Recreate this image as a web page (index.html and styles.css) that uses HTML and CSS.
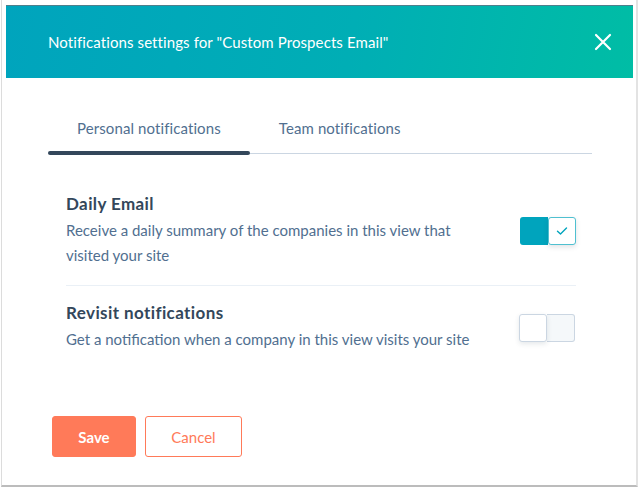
FILE: index.html
```html
<!DOCTYPE html>
<html>
<head>
<meta charset="utf-8">
<link rel="stylesheet" href="styles.css">
</head>
<body>
<div class="frame">
  <header class="modal-header">
    <h1 class="modal-title">Notifications settings for "Custom Prospects Email"</h1>
    <button class="close" aria-label="Close">
      <svg width="18" height="18" viewBox="0 0 18 18"><path d="M2 2 L16 16 M16 2 L2 16" stroke="#fff" stroke-width="2.2" stroke-linecap="round" fill="none"/></svg>
    </button>
  </header>
  <div class="modal-body">
    <nav class="tabs">
      <div class="tab active">Personal notifications</div>
      <div class="tab">Team notifications</div>
    </nav>
    <div class="settings">
      <div class="setting">
        <div class="setting-text">
          <div class="setting-title">Daily Email</div>
          <div class="setting-desc">Receive a daily summary of the companies in this view that visited your site</div>
        </div>
        <div class="toggle on">
          <span class="track"></span>
          <span class="knob">
            <svg width="12" height="10" viewBox="0 0 12 10"><path d="M1.5 5.2 L4.5 8 L10.5 2" stroke="#00a4bd" stroke-width="1.4" fill="none" stroke-linecap="round" stroke-linejoin="round"/></svg>
          </span>
        </div>
      </div>
      <div class="setting">
        <div class="setting-text">
          <div class="setting-title">Revisit notifications</div>
          <div class="setting-desc">Get a notification when a company in this view visits your site</div>
        </div>
        <div class="toggle off">
          <span class="knob"></span>
          <span class="track"></span>
        </div>
      </div>
    </div>
    <div class="actions">
      <button class="btn btn-primary">Save</button>
      <button class="btn btn-secondary">Cancel</button>
    </div>
  </div>
</div>
</body>
</html>
```

FILE: styles.css
```css
* { box-sizing: border-box; }
html, body { margin: 0; padding: 0; background: #ffffff; }
body {
  font-family: Lato, "Open Sans", sans-serif;
  color: #33475b;
}
.frame {
  height: 487px;
  margin-left: 1px;
  margin-right: 2px;
  border-left: 1px solid #dcdcdc;
  border-right: 2px solid #e3e3e3;
  border-bottom: 2px solid #bcbcbc;
  padding: 5px 3px 0 4px;
  display: flex;
  flex-direction: column;
}
.modal-header {
  height: 73px;
  border-top: 1px solid #4f7f8c;
  background: linear-gradient(100deg, #00a4bd 0%, #00aeb5 55%, #00bda5 100%);
  display: flex;
  align-items: center;
  justify-content: space-between;
  padding: 0 21px 0 42px;
}
.modal-title {
  margin: 0;
  font-size: 15px;
  font-weight: 400;
  color: #fff;
  letter-spacing: 0.1px;
}
.close {
  background: none;
  border: 0;
  padding: 0;
  width: 18px;
  height: 18px;
  display: flex;
  cursor: pointer;
}
.modal-body {
  padding: 0 41px 0 42px;
  display: flex;
  flex-direction: column;
}
.tabs {
  display: flex;
  border-bottom: 1px solid #cbd6e2;
  margin-top: 31px;
}
.tab {
  position: relative;
  padding: 0 29px;
  height: 44px;
  line-height: 38px;
  font-size: 15px;
  letter-spacing: 0.1px;
  color: #516f90;
}
.tab.active::after {
  content: "";
  position: absolute;
  left: 0;
  right: 0;
  bottom: -2px;
  height: 4px;
  border-radius: 2px;
  background: #33475b;
}
.settings {
  margin: 38px 16px 0 18px;
  display: flex;
  flex-direction: column;
}
.setting {
  display: flex;
  align-items: center;
  justify-content: space-between;
  padding: 0 0 17px;
}
.setting + .setting {
  border-top: 1px solid #eaf0f6;
  padding-top: 15px;
}
.setting-text { width: 420px; }
.setting-title {
  font-size: 17px;
  font-weight: 700;
  line-height: 24px;
  letter-spacing: 0.4px;
  color: #33475b;
}
.setting-desc {
  margin-top: 2px;
  font-size: 15px;
  line-height: 25px;
  color: #516f90;
}
.toggle {
  display: flex;
  width: 56px;
  height: 28px;
  margin-top: 2px;
}
.toggle .track, .toggle .knob {
  width: 28px;
  height: 28px;
  display: flex;
  align-items: center;
  justify-content: center;
}
.toggle.on .track {
  background: #00a4bd;
  border-radius: 3px 0 0 3px;
}
.toggle.on .knob {
  background: #fff;
  border: 1.5px solid #4fc0d0;
  border-radius: 3px;
  box-shadow: 0 2px 5px rgba(45, 62, 80, 0.15);
}
.toggle.off .knob {
  background: #fff;
  border: 1.5px solid #cbd6e2;
  border-radius: 3px;
  box-shadow: 0 2px 5px rgba(45, 62, 80, 0.12);
  position: relative;
  z-index: 1;
}
.toggle.off .track {
  background: #f5f8fa;
  border: 1.5px solid #cbd6e2;
  border-left: 0;
  border-radius: 0 3px 3px 0;
}
.toggle.off { margin-left: -1px; margin-right: 1px; }
.actions {
  display: flex;
  gap: 9px;
  margin-top: 47px;
  margin-left: 4px;
}
.btn {
  height: 41px;
  border-radius: 3px;
  font-family: Lato, "Open Sans", sans-serif;
  font-size: 15px;
  padding: 0;
  cursor: pointer;
}
.btn-primary {
  width: 84px;
  background: #ff7a59;
  border: 1px solid #ff7a59;
  color: #fff;
  font-weight: 700;
}
.btn-secondary {
  width: 97px;
  background: #fff;
  border: 1px solid #ff7a59;
  color: #ff7a59;
  font-weight: 400;
}
```
